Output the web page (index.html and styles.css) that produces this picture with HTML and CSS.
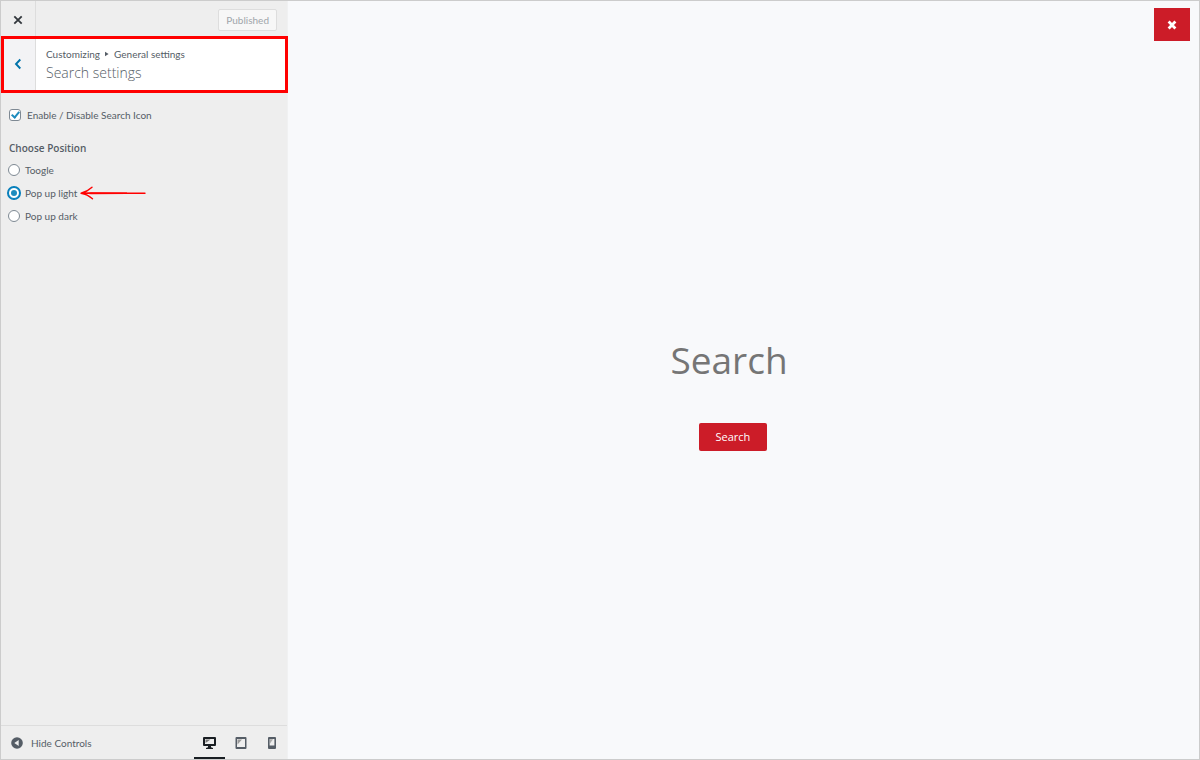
FILE: index.html
```html
<!DOCTYPE html>
<html lang="en">
<head>
<meta charset="utf-8">
<title>Search settings</title>
<link rel="stylesheet" href="styles.css">
</head>
<body>
<div class="customizer">
  <aside class="sidebar">
    <header class="topbar">
      <button class="close" type="button" aria-label="Close customizer">
        <svg width="10" height="10" viewBox="0 0 10 10"><path d="M1.3 1.3l7.4 7.4M8.7 1.3L1.3 8.7" stroke="#32373c" stroke-width="1.8" fill="none"/></svg>
      </button>
      <button class="published" type="button" disabled>Published</button>
    </header>
    <div class="section-title">
      <button class="back" type="button" aria-label="Back">
        <svg width="8" height="12" viewBox="0 0 8 12"><path d="M6.3 1.5L2 6l4.300 4.500" stroke="#0073aa" stroke-width="1.900" fill="none"/></svg>
      </button>
      <div class="titles">
        <span class="crumbs">Customizing <svg width="4" height="6" viewBox="0 0 4 6"><path d="M0 .8v4.400L3.600 3z" fill="#555d66"/></svg> General settings</span>
        <h1 class="heading">Search settings</h1>
      </div>
    </div>
    <form class="controls">
      <label class="check"><input type="checkbox" checked>Enable / Disable Search Icon</label>
      <fieldset class="position">
        <legend>Choose Position</legend>
        <label><input type="radio" name="position">Toogle</label>
        <label><input type="radio" name="position" checked>Pop up light
          <svg class="pointer" width="68" height="14" viewBox="0 0 68 14"><path d="M13 1.200Q8.500 5.500 2 7.200Q8.500 8.200 13.500 12.800M2 7.200L66 7.300" stroke="#f00" stroke-width="1.400" fill="none" stroke-linecap="round"/><path d="M2 7.200l10-1 36 .4v1.400l-36 .2z" fill="#f00"/></svg>
        </label>
        <label><input type="radio" name="position">Pop up dark</label>
      </fieldset>
    </form>
    <footer class="footer">
      <button class="collapse" type="button">
        <svg width="12" height="12" viewBox="0 0 12 12"><circle cx="6" cy="6" r="5.800" fill="#555d66"/><path d="M7.700 3v6L3.300 6z" fill="#eee"/></svg>
        Hide Controls
      </button>
      <div class="devices">
        <button class="device active" type="button" aria-label="Desktop preview">
          <svg width="13" height="12" viewBox="0 0 13 12"><path fill="#191e23" fill-rule="evenodd" d="M1 0h11q1 0 1 1v7q0 1-1 1H8v1.200l2 .8v1H3v-1l2-.8V9H1Q0 9 0 8V1q0-1 1-1zM2 2v5h9V2z"/><path d="M2.500 2.500h5l-5 3.500z" fill="#777"/></svg>
        </button>
        <button class="device" type="button" aria-label="Tablet preview">
          <svg width="12" height="12" viewBox="0 0 12 12"><path fill="#555d66" fill-rule="evenodd" d="M1.500 0h9q1 0 1 1v10q0 1-1 1h-9q-1 0-1-1V1q0-1 1-1zM2 2v8h8V2z"/><path d="M2.500 2.500h4.500l-4.500 5z" fill="#999"/></svg>
        </button>
        <button class="device" type="button" aria-label="Mobile preview">
          <svg width="8" height="12" viewBox="0 0 8 12"><path fill="#555d66" fill-rule="evenodd" d="M1 0h6q1 0 1 1v10q0 1-1 1H1q-1 0-1-1V1q0-1 1-1zM1.600 2v6.500h4.800V2z"/><path d="M2 2.300h3L2 6.500z" fill="#aaa"/></svg>
        </button>
      </div>
    </footer>
  </aside>
  <main class="preview">
    <button class="dismiss" type="button" aria-label="Close search">
      <svg width="10" height="10" viewBox="0 0 10 10"><path d="M1.600 1.600l6.800 6.800M8.400 1.600L1.600 8.400" stroke="#fff" stroke-width="2.800" fill="none"/></svg>
    </button>
    <form class="search">
      <input class="field" type="text" placeholder="Search" aria-label="Search">
      <button class="submit" type="button">Search</button>
    </form>
  </main>
</div>
</body>
</html>
```
FILE: styles.css
```css
* { box-sizing: border-box; }
body {
  margin: 0;
  font: 10px/14px Lato, "Open Sans", sans-serif;
  color: #555d66;
}
button {
  margin: 0;
  padding: 0;
  border: 0;
  background: none;
  font: inherit;
  color: inherit;
}
svg { display: block; flex: none; }

.customizer {
  display: flex;
  min-height: 100vh;
  border: 1px solid #ccc;
}
.sidebar {
  display: flex;
  flex-direction: column;
  flex: 0 0 287px;
  background: #eee;
  border-right: 1px solid #f0f1f2;
}

.topbar {
  display: flex;
  align-items: center;
  justify-content: space-between;
  height: 35px;
  padding-right: 10px;
}
.close {
  display: grid;
  place-items: center;
  align-self: stretch;
  width: 35px;
  padding-top: 2px;
  border-right: 1px solid #ddd;
}
.published {
  height: 22px;
  margin-top: 3px;
  padding: 0 7px;
  border: 1px solid #ddd;
  border-radius: 2px;
  background: #f7f7f7;
  color: #a0a5aa;
}

.section-title {
  display: flex;
  height: 57px;
  margin-right: -1px;
  border: 3px solid #f00;
  background: #fff;
}
.back {
  display: grid;
  place-items: center;
  width: 32px;
  padding: 0 3px 2px 0;
  border-right: 1px solid #ddd;
  background: #f3f3f5;
}
.titles { padding: 8px 10px; }
.crumbs { display: flex; align-items: center; gap: 5px; }
.heading {
  margin: 2px 0 0;
  font: 300 14px/20px "Open Sans", "Noto Sans", sans-serif;
}

.controls { flex: 1; padding: 15px 7px; }
.controls label { display: flex; align-items: center; }
.check { gap: 6px; padding-left: 1px; }
.position { margin: 0; padding: 0; border: 0; }
.position legend {
  padding: 19px 1px 5px;
  font: 600 10px/14px "Open Sans", "Noto Sans", sans-serif;
}
.position label { height: 23px; gap: 5px; }
.position legend + label { margin-top: -2px; }
.pointer { margin-left: -3px; }
input[type="checkbox"], input[type="radio"] {
  appearance: none;
  flex: none;
  display: grid;
  place-items: center;
  width: 12px;
  height: 12px;
  margin: 0;
  border: 1px solid #7e8993;
  background: #fff;
}
input[type="checkbox"] { border-radius: 3px; }
input[type="radio"] { border-radius: 50%; }
input[type="checkbox"]:checked::before {
  content: "";
  box-sizing: border-box;
  width: 5px;
  height: 8px;
  margin-bottom: 2px;
  border: solid #1e8cbe;
  border-width: 0 2px 2px 0;
  transform: rotate(40deg);
}
input[type="radio"]:checked {
  border-color: #007cba;
  box-shadow: 0 0 0 1px #007cba;
}
input[type="radio"]:checked::before {
  content: "";
  width: 6px;
  height: 6px;
  border-radius: 50%;
  background: #1e8cbe;
}

.footer {
  display: flex;
  justify-content: space-between;
  height: 34px;
  border-top: 1px solid #ddd;
}
.collapse {
  display: flex;
  align-items: center;
  gap: 8px;
  padding-left: 10px;
}
.devices { display: flex; }
.device {
  display: grid;
  place-items: center;
  width: 31px;
  border-bottom: 2px solid transparent;
  padding-top: 2px;
}
.device.active { border-color: #191e23; }

.preview {
  position: relative;
  display: grid;
  place-items: center;
  flex: 1;
  padding-top: 26px;
  background: #f8f9fb;
}
.dismiss {
  position: absolute;
  top: 7px;
  right: 9px;
  display: grid;
  place-items: center;
  width: 36px;
  height: 33px;
  background: #cc1c28;
}
.search {
  display: flex;
  flex-direction: column;
  align-items: flex-start;
  gap: 38px;
  width: 146px;
}
.field {
  width: 100%;
  height: 50px;
  padding: 0;
  border: 0;
  outline: 0;
  background: none;
  font: 37px/50px "Open Sans", "Noto Sans", sans-serif;
}
.field::placeholder { color: #757575; opacity: 1; }
.submit {
  height: 28px;
  margin-left: 28px;
  padding: 0 17px;
  border-radius: 2px;
  background: #cc1c28;
  color: #fff;
  font: 11px/14px "Open Sans", "Noto Sans", sans-serif;
}
```
